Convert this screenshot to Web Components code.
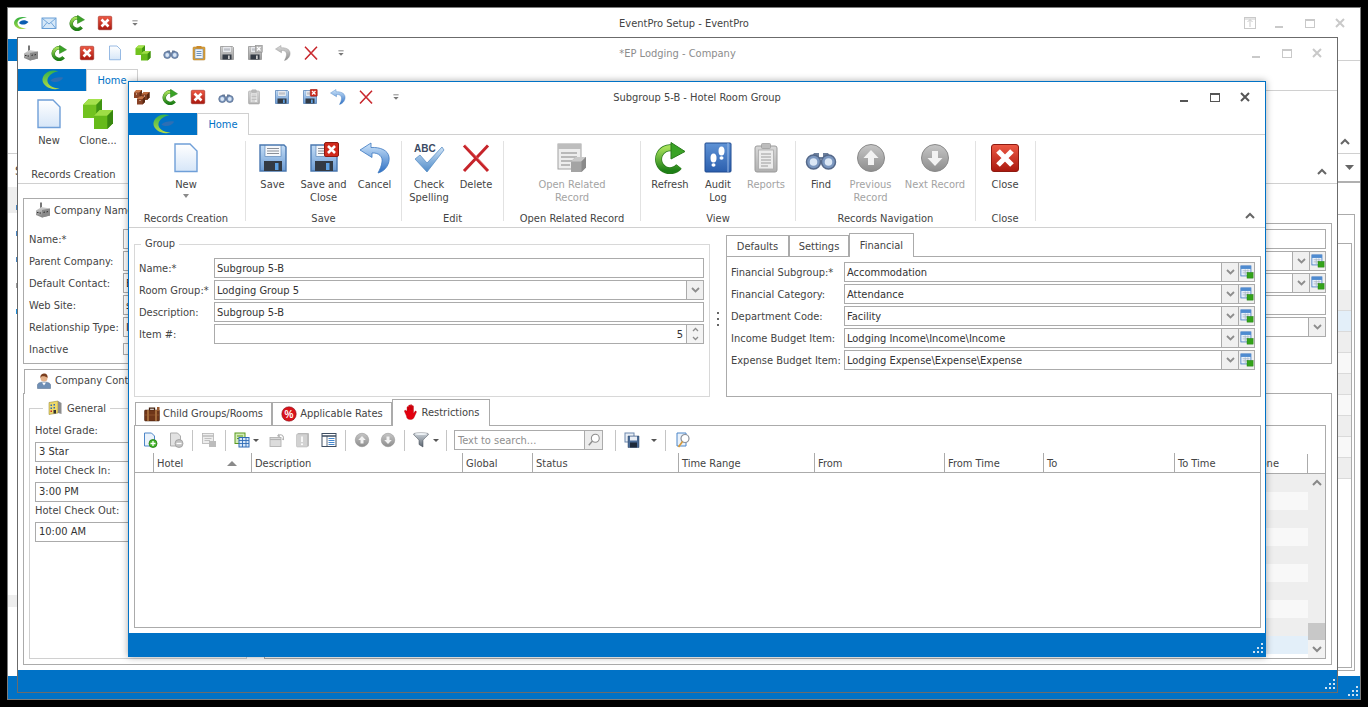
<!DOCTYPE html>
<html lang="en">
<head>
<meta charset="utf-8">
<title>EventPro</title>
<style>
html,body{margin:0;padding:0;background:#000;overflow:hidden}
body{font:condensed 11px "DejaVu Sans Condensed","DejaVu Sans",sans-serif;color:#444}
</style>
</head>
<body>
<x-desktop>

<x-window x="7" y="7" w="1354" h="693" status="23" border="#7d7d7d" heading="EventPro Setup - EventPro" titlecolor="#444" controls="pin" dim>
  <x-qat slot="qat" icons="logoq,mail,refresh,closered,more"></x-qat>
  <x-apptabs></x-apptabs>
  <x-ribbon></x-ribbon>
  <x-peek-main></x-peek-main>
</x-window>

<x-window x="17" y="37" w="1321" h="656" status="22" border="#6b6b6b" heading="*EP Lodging - Company" titlecolor="#8c8c8c" dim>
  <x-qat slot="qat" icons="building,refresh,closered,newdoc,clone,binoc,clipo,saveg,savecloseg,undog,delx,more"></x-qat>
  <x-apptabs home></x-apptabs>
  <x-ribbon>
    <x-rgroup w="117" pr="5" caption="Records Creation">
      <x-rbtn icon="newdoc" w="49" label="New"></x-rbtn>
      <x-rbtn icon="clone" w="49" label="Clone..."></x-rbtn>
    </x-rgroup>
  </x-ribbon>
  <x-company></x-company>
</x-window>

<x-window x="128" y="81" w="1138" h="576" status="23" border="#0072c6" heading="Subgroup 5-B - Hotel Room Group" titlecolor="#444" shadow>
  <x-qat slot="qat" icons="bricks,refresh,closered,binoc,clipg,save,saveclose,undo,delx,more"></x-qat>
  <x-apptabs home></x-apptabs>
  <x-ribbon>
    <x-rgroup w="117" pr="2" caption="Records Creation">
      <x-rbtn icon="newdoc" w="84" label="New" arrow></x-rbtn>
    </x-rgroup>
    <x-rgroup w="156" caption="Save">
      <x-rbtn icon="save" w="51" label="Save"></x-rbtn>
      <x-rbtn icon="saveclose" w="51" label="Save and|Close"></x-rbtn>
      <x-rbtn icon="undo" w="51" label="Cancel"></x-rbtn>
    </x-rgroup>
    <x-rgroup w="102" caption="Edit">
      <x-rbtn icon="spell" w="47" label="Check|Spelling"></x-rbtn>
      <x-rbtn icon="delx" w="47" label="Delete"></x-rbtn>
    </x-rgroup>
    <x-rgroup w="137" caption="Open Related Record">
      <x-rbtn icon="related" w="100" label="Open Related|Record" disabled></x-rbtn>
    </x-rgroup>
    <x-rgroup w="155" caption="View">
      <x-rbtn icon="refresh" w="48" label="Refresh"></x-rbtn>
      <x-rbtn icon="audit" w="48" label="Audit|Log"></x-rbtn>
      <x-rbtn icon="clipg" w="48" label="Reports" disabled></x-rbtn>
    </x-rgroup>
    <x-rgroup w="180" caption="Records Navigation">
      <x-rbtn icon="binoc" w="50" label="Find"></x-rbtn>
      <x-rbtn icon="up" w="49" label="Previous|Record" disabled></x-rbtn>
      <x-rbtn icon="down" w="80" label="Next Record" disabled></x-rbtn>
    </x-rgroup>
    <x-rgroup w="60" pr="1" caption="Close">
      <x-rbtn icon="closered" w="50" label="Close"></x-rbtn>
    </x-rgroup>
  </x-ribbon>
  <x-roomgroup></x-roomgroup>
</x-window>

</x-desktop>

<script>
/* ---------- icons ---------- */
const grad=(id,a,b)=>`<linearGradient id="${id}" x1="0" y1="0" x2="0" y2="1"><stop offset="0" stop-color="${a}"/><stop offset="1" stop-color="${b}"/></linearGradient>`;
const floppy=(a,b,line,x)=>`<defs>${grad('f',a,b)}</defs>
 <path d="M3 3H27L29 5V29H3Z" fill="url(#f)" stroke="${line}" stroke-width="1.4"/>
 <rect x="8" y="3.5" width="16" height="11" fill="#f6f8fb" stroke="${line}" stroke-width=".6"/>
 <path d="M10 6.5H22M10 9H22M10 11.5H22" stroke="#8a8f98" stroke-width="1"/>
 <rect x="7" y="19" width="18" height="10" fill="#333a44"/><rect x="18" y="21" width="3.5" height="7" fill="${x}"/>`;
const redbadge=`<rect x="16.5" y="0.5" width="14" height="14" rx="1.5" fill="#cf2a1c" stroke="#8f1a10"/><path d="M20 4L27 11M27 4L20 11" stroke="#fff" stroke-width="2.6"/>`;
const cube=(x,y,s,t,l,r)=>`<path d="M${x} ${y+s*.3}L${x+s*.3} ${y}H${x+s}V${y+s*.7}L${x+s*.7} ${y+s}H${x}Z" fill="${l}"/><path d="M${x} ${y+s*.3}L${x+s*.3} ${y}H${x+s}L${x+s*.7} ${y+s*.3}Z" fill="${t}"/><path d="M${x+s*.7} ${y+s*.3}L${x+s} ${y}V${y+s*.7}L${x+s*.7} ${y+s}Z" fill="${r}"/>`;
const circ=(dir)=>`<defs>${grad('c','#c6c6c6','#8d8d8d')}</defs><circle cx="16" cy="16" r="13.5" fill="url(#c)" stroke="#8a8a8a"/>
 <path d="${dir?'M16 24L8.5 16H13V9H19V16H23.5Z':'M16 8L23.5 16H19V23H13V16H8.5Z'}" fill="#f2f2f2"/>`;
const ICONS={
 logoq:`<defs>${grad('g','#2fae3c','#a6d94a')}</defs><path d="M28 6C16 0 2 7 2 16s14 16 26 10C18 28 9 23 9 16S18 5 28 6Z" fill="url(#g)"/><path d="M12 16C14 10 24 8 31 14 26 20 17 21 12 16Z" fill="#0b5db0"/>`,
 logo:`<defs>${grad('g','#35b04a','#b6dc45')}</defs><path d="M24 3C12-1 2 7 2 15s12 16 24 12C15 27 8 21 9 15S15 5 24 3Z" fill="url(#g)"/><path d="M13 16C17 12 25 11 31 12 27 18 19 20 13 16Z" fill="#2d6fb4"/>`,
 mail:`<rect x="2" y="6" width="28" height="21" fill="#d6e8f8" stroke="#5a96d2" stroke-width="1.8"/><path d="M3 7L16 18L29 7M3 26L12 15M29 26L20 15" fill="none" stroke="#5a96d2" stroke-width="1.6"/>`,
 refresh:`<defs>${grad('g','#a6e05a','#1d7f16')}</defs><path d="M25 24.5A11.5 11.5 0 1 1 18.5 6" fill="none" stroke="#2a7a1c" stroke-width="7"/><path d="M25 24.5A11.5 11.5 0 1 1 18.5 6" fill="none" stroke="url(#g)" stroke-width="5.6"/><path d="M17 0.5L31 9.5L17 17Z" fill="#3aa326" stroke="#2a7a1c"/>`,
 closered:`<defs>${grad('g','#ee5a45','#a9180e')}</defs><rect x="2.5" y="2.5" width="27" height="27" rx="2.5" fill="url(#g)" stroke="#8f1a10"/><path d="M9 9L23 23M23 9L9 23" stroke="#fff" stroke-width="5.2"/>`,
 more:`<path d="M10 11H22" stroke="#777" stroke-width="2"/><path d="M10 16H22L16 22Z" fill="#777"/>`,
 newdoc:`<defs>${grad('g','#ffffff','#d6e6f8')}</defs><path d="M5 2H20L27 9V29.5H5Z" fill="url(#g)" stroke="#6f9fd8" stroke-width="1.4"/>`,
 clone:`${cube(1,1,19,'#a5e24d','#71c21f','#3f9412')}${cube(12,12,19,'#9edd46','#66ba1a','#38880f')}`,
 binoc:`<path d="M9 11H14V15H18V11H23L27 17H5Z" fill="#6c7f9c"/><circle cx="8.5" cy="20" r="7" fill="#7b97bf" stroke="#55698a" stroke-width="1.5"/><circle cx="23.5" cy="20" r="7" fill="#7b97bf" stroke="#55698a" stroke-width="1.5"/><circle cx="8.5" cy="20" r="3.8" fill="#dbe7f5"/><circle cx="23.5" cy="20" r="3.8" fill="#dbe7f5"/>`,
 clipo:`<rect x="4" y="4" width="24" height="26" rx="2" fill="#e0a33a" stroke="#a8741d"/><rect x="8" y="8" width="16" height="19" fill="#eef4fb" stroke="#4a78b0"/><rect x="11" y="2" width="10" height="5" fill="#c9892a"/><path d="M11 13H21M11 17H21M11 21H21" stroke="#4a78b0" stroke-width="1.6"/>`,
 clipg:`<defs>${grad('g','#d8d8d8','#b0b0b0')}</defs><rect x="5" y="4" width="22" height="26" rx="2" fill="url(#g)" stroke="#9a9a9a"/><rect x="8.5" y="8" width="15" height="19" fill="#ececec" stroke="#aaa" stroke-width=".8"/><rect x="11.5" y="1.5" width="9" height="5" rx="1" fill="#bcbcbc" stroke="#999" stroke-width=".7"/><path d="M11 12H21M11 15H21M11 18H21M11 21H21M11 24H18" stroke="#9c9c9c" stroke-width="1.1"/>`,
 save:floppy('#c6def6','#6b9bd4','#4a78b0','#5d9fe0'),
 saveg:floppy('#d4d4d4','#9a9a9a','#8a8a8a','#c9c9c9'),
 saveclose:floppy('#c6def6','#6b9bd4','#4a78b0','#5d9fe0')+redbadge,
 savecloseg:floppy('#d4d4d4','#9a9a9a','#8a8a8a','#c9c9c9')+`<rect x="16.5" y="0.5" width="14" height="14" fill="#b5b5b5" stroke="#8a8a8a"/><path d="M20 4L27 11M27 4L20 11" stroke="#fff" stroke-width="2.4"/>`,
 undo:`<defs>${grad('g','#cfe6fb','#2c6fc4')}</defs><path d="M12 1L1 8L13 15.5V11C20 10.5 24 15 23 20 22.5 24 21 27 19 31 27 29 31 21 30 15 29 8 21 5 12 5.5Z" fill="url(#g)" stroke="#3d78c0" stroke-width=".8"/>`,
 undog:`<defs>${grad('g','#dcdcdc','#8e8e8e')}</defs><path d="M12 1L1 8L13 15.5V11C20 10.5 24 15 23 20 22.5 24 21 27 19 31 27 29 31 21 30 15 29 8 21 5 12 5.5Z" fill="url(#g)" stroke="#8a8a8a" stroke-width=".8"/>`,
 delx:`<path d="M4 3.5L28 29M28 3.5L4 29" stroke="#c6242a" stroke-width="3"/><path d="M5 3L28 27" stroke="#e8686a" stroke-width=".8"/>`,
 building:`<defs>${grad('g','#d4d4d4','#7e7e7e')}</defs><rect x="10" y="1" width="4" height="11" fill="#777"/><path d="M2 17L13 10L30 13V27L14 31L2 26Z" fill="url(#g)"/><path d="M14 16V31L30 27V13Z" fill="#8a8a8a"/><path d="M4 20h3v2H4zM9 21h3v2H9zM17 20l3-1v2l-3 1zM23 19l3-1v2l-3 1z" fill="#333"/>`,
 bricks:`${cube(0,2,16,'#c9784a','#8a4427','#5d2a14')}${cube(15,6,16,'#bd6b3d','#7e3c21','#54250f')}${cube(6,15,16,'#c47345','#874125','#5a2812')}<path d="M4 9h2v2H4zM20 13h2v2h-2zM11 22h2v2h-2z" fill="#f2dfc8"/>`,
 spell:`<text x="1" y="10" font-family="Liberation Sans" font-weight="700" font-size="10" fill="#3b4a63">ABC</text><defs>${grad('g','#cfe3f6','#4f8bc9')}</defs><path d="M2 17L7 13L14 21L29 5L31 8L14 30Z" fill="url(#g)" stroke="#4f86c0" stroke-width=".7"/>`,
 related:`<rect x="2" y="2" width="23" height="25" fill="#ededed" stroke="#a2a2a2"/><rect x="2" y="2" width="23" height="5" fill="#bdbdbd"/><path d="M5 11H21M5 15H21M5 19H16M5 23H14" stroke="#a8a8a8" stroke-width="1.3"/>${cube(15,15,15,'#c9c9c9','#a4a4a4','#8a8a8a')}`,
 audit:`<defs>${grad('g','#5f93d6','#2b5fae')}</defs><rect x="3" y="1" width="26" height="29" rx="1" fill="url(#g)" stroke="#1f4a90"/><path d="M26 1V30" stroke="#9cbbe6"/><ellipse cx="19.5" cy="9" rx="3" ry="4.6" fill="#fff"/><ellipse cx="19.5" cy="16" rx="2" ry="1.8" fill="#fff"/><ellipse cx="11.5" cy="16" rx="3" ry="4.6" fill="#fff"/><ellipse cx="11.5" cy="23" rx="2" ry="1.8" fill="#fff"/>`,
 up:circ(0),down:circ(1),
 suitcase:`<rect x="1" y="8" width="30" height="22" rx="2" fill="#6e3518" stroke="#3f1e0c"/><path d="M11 8V4H21V8" fill="none" stroke="#3f1e0c" stroke-width="2.5"/><path d="M8 8V30M24 8V30" stroke="#c08a50" stroke-width="2.6"/><path d="M1 18H31" stroke="#a8683a"/><rect x="26" y="2" width="5" height="8" fill="#9a5a30"/>`,
 percent:`<circle cx="16" cy="16" r="14.5" fill="#d9141c" stroke="#77101a"/><text x="16" y="23" text-anchor="middle" font-family="Liberation Sans" font-weight="700" font-size="20" fill="#fff">%</text>`,
 hand:`<path d="M9 14V7c0-2.4 3-2.4 3 0V12V4c0-2.4 3.4-2.4 3.4 0V12V3c0-2.4 3.4-2.4 3.4 0V12V5c0-2.4 3.2-2.4 3.2 0V19l2.6-4c1.4-2 4.2-.4 3 1.8L23 27c-1.5 3-4 4-7.5 4-5 0-7.5-2.5-7.5-7L4 15c-.8-2.2 2-3.4 3.2-1.5Z" fill="#e3000f" stroke="#a8000a" stroke-width=".7" transform="translate(-1 0)"/>`,
 person:`<path d="M3 31V24C3 20 9 18 16 18S29 20 29 24V31Z" fill="#6f8fb5" stroke="#4c6688"/><path d="M12 19L16 25L20 19Z" fill="#fff"/><circle cx="16" cy="10" r="7" fill="#e3b088"/><path d="M9 10C8 3 13 1 17 1S24 4 23 10C21 6 14 6 12 6.5 10.5 7 10 9 9 10Z" fill="#7a3d1e"/>`,
 general:`<path d="M4 5L22 2V26L4 29Z" fill="#eed96a" stroke="#8a7a2a"/><path d="M22 2L29 6V28L22 26Z" fill="#8d8d8d"/><path d="M7 9h3v3H7zM13 8h3v3h-3zM7 15h3v3H7zM13 14h3v3h-3z" fill="#2f6bb5"/><path d="M7 21h3v3H7z" fill="#c6242a"/><path d="M13 20h5v7h-5z" fill="#333"/>`,
 lookup:`<rect x="2" y="2" width="23" height="23" fill="#e8f1fb" stroke="#3d78c0" stroke-width="1.8"/><rect x="2" y="2" width="23" height="7" fill="#4f8bd0"/><path d="M6 13H22M6 18H22M12 10V24M18 10V24" stroke="#a9b6c6" stroke-width="1.8"/><rect x="16" y="17" width="14" height="13" fill="#34a31a" stroke="#1c7a0c"/>`,
 docadd:`<path d="M5 2H19L25 8V28H5Z" fill="#eaf2fb" stroke="#4d86c8" stroke-width="2"/><circle cx="22" cy="23" r="8" fill="#45b52a" stroke="#1f7a12" stroke-width="1.6"/><path d="M22 18V28M17 23H27" stroke="#fff" stroke-width="2.6"/>`,
 docdel:`<path d="M5 2H19L25 8V28H5Z" fill="#e2e2e2" stroke="#ababab" stroke-width="2"/><circle cx="22" cy="23" r="8" fill="#c2c2c2" stroke="#9c9c9c" stroke-width="1.6"/><path d="M17 23H27" stroke="#fff" stroke-width="2.6"/>`,
 listg:`<rect x="3" y="3" width="22" height="20" fill="#ededed" stroke="#b4b4b4" stroke-width="1.6"/><path d="M3 8H25" stroke="#b4b4b4" stroke-width="2.6"/><path d="M7 13H21M7 17H18" stroke="#b4b4b4" stroke-width="1.6"/><rect x="16" y="18" width="14" height="12" fill="#bcbcbc"/>`,
 cols:`<rect x="2" y="2" width="20" height="21" fill="#d4ecb8" stroke="#5a9a1e" stroke-width="2"/><path d="M6 8H18M6 13H18" stroke="#5a9a1e" stroke-width="2"/><rect x="10" y="11" width="20" height="19" fill="#d8e8f8" stroke="#2f6bb5" stroke-width="2"/><path d="M10 17H30M10 23H30M17 11V30M24 11V30" stroke="#2f6bb5" stroke-width="1.8"/>`,
 wing:`<rect x="2" y="11" width="22" height="18" fill="#dcdcdc" stroke="#b2b2b2" stroke-width="1.8"/><path d="M2 15H24" stroke="#b2b2b2" stroke-width="2.4"/><path d="M18 8C24 3 30 6 29 15L26 14" fill="none" stroke="#b2b2b2" stroke-width="2.2"/><path d="M20 3L16 8L22 11Z" fill="#b2b2b2"/>`,
 note:`<rect x="5" y="2" width="23" height="27" rx="2" fill="#bcbcbc"/><rect x="3" y="4" width="22" height="26" rx="2" fill="#d2d2d2" stroke="#b0b0b0"/><path d="M14 9V20" stroke="#fff" stroke-width="3.2"/><circle cx="14" cy="24.5" r="2" fill="#fff"/>`,
 panel:`<rect x="2" y="3" width="28" height="26" fill="#fff" stroke="#3d4c60" stroke-width="2"/><path d="M2 8H30" stroke="#3d4c60" stroke-width="3"/><path d="M12 8V29" stroke="#3d4c60" stroke-width="1.6"/><path d="M15 13H27M15 17H27M15 21H27M15 25H27" stroke="#2f79c8" stroke-width="1.8"/>`,
 funnel:`<defs>${grad('g','#cfd6dc','#5c6570')}</defs><path d="M1 4C1 1 31 1 31 4 31 7 20 14 20 17V30L12 25V17C12 14 1 7 1 4Z" fill="url(#g)" stroke="#3f4750"/><ellipse cx="16" cy="4" rx="12" ry="2" fill="#eef2f5"/>`,
 savem:`<rect x="2" y="2" width="18" height="18" fill="#e8eef6" stroke="#6d88ad" stroke-width="2"/><path d="M8 8H30V31H8Z" fill="#4a6b96" stroke="#2d4566"/><rect x="12" y="9" width="14" height="8" fill="#e9eef5"/><rect x="12" y="21" width="14" height="10" fill="#1e2a3a"/>`,
 find:`<path d="M4 2H22V28H4Z" fill="#eaf2fb" stroke="#4d86c8" stroke-width="2"/><circle cx="20" cy="13" r="8" fill="#fff" stroke="#8a8f98" stroke-width="2.4"/><path d="M15 19L7 30" stroke="#d69a3a" stroke-width="3.4"/>`,
 mag:`<circle cx="19" cy="12" r="9" fill="#fff" stroke="#8e8e8e" stroke-width="2.4"/><path d="M12.5 18.5L4 28" stroke="#8e8e8e" stroke-width="3.4"/>`
};
const def=(name,cls)=>customElements.define(name,cls);
const shadow=(el,html)=>{const r=el.attachShadow({mode:'open'});r.innerHTML=html;return r;};
const esc=s=>(s||'').replace(/&/g,'&amp;').replace(/</g,'&lt;');

def('x-icon',class extends HTMLElement{connectedCallback(){
  if(this.shadowRoot)return;const s=this.getAttribute('size')||16;
  shadow(this,`<style>:host{display:block;width:${s}px;height:${s}px;flex:none}svg{display:block}</style>
  <svg xmlns="http://www.w3.org/2000/svg" width="${s}" height="${s}" viewBox="0 0 32 32">${ICONS[this.getAttribute('name')]||''}</svg>`);
}});

def('x-desktop',class extends HTMLElement{constructor(){super();
  shadow(this,`<style>:host{display:block;position:relative;width:1368px;height:707px;background:#000;overflow:hidden}</style><slot></slot>`);
}});

def('x-window',class extends HTMLElement{connectedCallback(){
  if(this.shadowRoot)return;const a=n=>this.getAttribute(n);
  const dim=this.hasAttribute('dim');const c=dim?'#c9c9c9':'#555';
  const ctl=(k)=>{
    const m={pin:`<rect x="1.5" y="1.5" width="11" height="11" fill="none" stroke="${c}"/><path d="M7 11V4M4.5 6L7 3.5L9.5 6M1 3H13" stroke="${c}" fill="none"/>`,
      min:`<path d="M1 10H9" stroke="${c}" stroke-width="2"/>`,
      max:`<rect x="1.5" y="2.5" width="9" height="8" fill="none" stroke="${c}"/><path d="M1 3H11" stroke="${c}" stroke-width="2"/>`,
      close:`<path d="M2 2L10 10M10 2L2 10" stroke="${c}" stroke-width="2"/>`}[k];
    const w=k=='pin'?14:12;
    return `<span class="c"><svg width="${w}" height="${w}" viewBox="0 0 ${w} ${w}">${m}</svg></span>`;};
  const ctrls=(a('controls')=='pin'?ctl('pin'):'')+ctl('min')+ctl('max')+ctl('close');
  shadow(this,`<style>
  :host{position:absolute;isolation:isolate;left:${a('x')}px;top:${a('y')}px;width:${a('w')}px;height:${a('h')}px;box-sizing:border-box;
    border:1px solid ${a('border')};background:#fff;display:flex;flex-direction:column;
    ${this.hasAttribute('shadow')?'box-shadow:0 0 7px rgba(0,0,0,.35);':''}}
  .t{height:31px;flex:none;display:grid;grid-template-columns:1fr auto 1fr;align-items:center;box-sizing:border-box;padding-bottom:1px}
  .q{margin-left:-1px}
  .h{color:${a('titlecolor')}}
  .cs{display:flex;justify-content:flex-end;padding-right:5px}
  .c{width:30px;display:flex;justify-content:center;align-items:center;height:20px}
  .b{flex:1;min-height:0;display:flex;flex-direction:column}
  .st{height:${a('status')}px;flex:none;background:#0072c6;display:flex;justify-content:flex-end;align-items:flex-end}
  .st svg{display:block;margin:0 2px 3px 0}
  </style>
  <div class="t"><div class="q"><slot name="qat"></slot></div><div class="h">${esc(a('heading'))}</div><div class="cs">${ctrls}</div></div>
  <div class="b"><slot></slot></div>
  <div class="st"><svg width="10" height="10" viewBox="0 0 10 10" fill="#cfe3f4"><path d="M8 0h2v2H8zM4 4h2v2H4zM8 4h2v2H8zM0 8h2v2H0zM4 8h2v2H4zM8 8h2v2H8z"/></svg></div>`);
}});

def('x-qat',class extends HTMLElement{connectedCallback(){
  if(this.shadowRoot)return;
  const ic=this.getAttribute('icons').split(',');
  shadow(this,`<style>:host{display:flex;height:30px}.q{width:28px;display:flex;align-items:center;justify-content:center}.m{margin-left:2px}</style>`+
   ic.map(n=>`<span class="q ${n=='more'?'m':''}"><x-icon name="${n}" size="${n=='more'?14:16}"></x-icon></span>`).join(''));
}});

def('x-apptabs',class extends HTMLElement{connectedCallback(){
  if(this.shadowRoot)return;
  shadow(this,`<style>:host{display:flex;height:22px;flex:none;box-sizing:border-box;border-bottom:1px solid #d0d0d0}
  .a{width:68px;height:22px;background:#0072c6;display:flex;align-items:center;justify-content:center}
  .h{width:52px;height:22px;box-sizing:border-box;border:1px solid #d0d0d0;border-bottom:0;background:#fff;color:#0072c6;display:flex;align-items:center;justify-content:center}
  </style><div class="a"><x-icon name="logo" size="23"></x-icon></div>${this.hasAttribute('home')?'<div class="h">Home</div>':''}`);
}});

def('x-ribbon',class extends HTMLElement{constructor(){super();
  shadow(this,`<style>:host{display:flex;height:93px;flex:none;box-sizing:border-box;border-bottom:1px solid #d0d0d0;padding-top:6px}
  .ch{margin-left:auto;align-self:flex-end;width:20px;margin-right:5px;margin-bottom:8px;display:flex;justify-content:center}
  svg{display:block}</style><slot></slot>
  <div class="ch"><svg width="10" height="7" viewBox="0 0 10 7"><path d="M1 6L5 2L9 6" fill="none" stroke="#666" stroke-width="2"/></svg></div>`);
}});

def('x-rgroup',class extends HTMLElement{connectedCallback(){
  if(this.shadowRoot)return;
  shadow(this,`<style>:host{display:flex;flex-direction:column;width:${this.getAttribute('w')}px;height:80px;box-sizing:border-box;border-right:1px solid #e2e2e2;flex:none}
  .b{flex:1;display:flex;justify-content:center;padding-top:1px;padding-right:${this.getAttribute('pr')||0}px}
  .c{height:14px;line-height:14px;margin-bottom:-5px;text-align:center;color:#444;white-space:nowrap;padding-right:${this.getAttribute('pr')||0}px}</style>
  <div class="b"><slot></slot></div><div class="c">${esc(this.getAttribute('caption'))}</div>`);
}});

def('x-rbtn',class extends HTMLElement{connectedCallback(){
  if(this.shadowRoot)return;const a=n=>this.getAttribute(n);
  const lines=a('label').split('|').map(l=>`<div>${esc(l)}</div>`).join('');
  shadow(this,`<style>:host{display:flex;flex-direction:column;align-items:center;width:${a('w')}px;flex:none;color:${this.hasAttribute('disabled')?'#a3a3a3':'#444'};line-height:13px;text-align:center;white-space:nowrap}
  .l{margin-top:4px}.ar{width:0;height:0;border:3px solid transparent;border-top:4px solid #8a8a8a;border-bottom:0;margin-top:3px}</style>
  <x-icon name="${a('icon')}" size="32"></x-icon><div class="l">${lines}</div>${this.hasAttribute('arrow')?'<div class="ar"></div>':''}`);
}});

def('x-field',class extends HTMLElement{connectedCallback(){
  if(this.shadowRoot)return;const a=n=>this.getAttribute(n);
  const chev=(c='#8d8d8d')=>`<svg width="9" height="6" viewBox="0 0 9 6"><path d="M1 1L4.5 4.5L8 1" fill="none" stroke="${c}" stroke-width="1.8"/></svg>`;
  const t=a('type')||'text';
  let btn='';
  if(t=='combo'||t=='lookup')btn+=`<span class="b">${chev()}</span>`;
  if(t=='spin')btn+=`<span class="s"><svg width="7" height="5" viewBox="0 0 7 5"><path d="M1 4L3.5 1.5L6 4" fill="none" stroke="#8d8d8d" stroke-width="1.3"/></svg><svg width="7" height="5" viewBox="0 0 7 5"><path d="M1 1L3.5 3.5L6 1" fill="none" stroke="#8d8d8d" stroke-width="1.3"/></svg></span>`;
  const look=t=='lookup'?`<span class="k"><x-icon name="lookup" size="14"></x-icon></span>`:'';
  shadow(this,`<style>:host{display:grid;grid-template-columns:var(--label,75px) 1fr;height:20px;align-items:center;color:#444;white-space:nowrap}
  .w{display:flex;height:20px;min-width:0}
  .i{flex:1;min-width:0;box-sizing:border-box;border:1px solid #ababab;display:flex;align-items:center;background:#fff;padding-left:2px;overflow:hidden}
  .v{flex:1;${t=='spin'?'text-align:right;padding-right:3px;':''}color:#333}
  .b{width:16px;height:18px;border-left:1px solid #ababab;background:#f0f0f0;display:flex;align-items:center;justify-content:center;flex:none}
  .s{width:16px;height:18px;border-left:1px solid #ababab;display:flex;flex-direction:column;align-items:center;justify-content:space-around;flex:none;background:#f4f4f4}
  .k{width:16px;box-sizing:border-box;border:1px solid #ababab;border-left:0;background:#f0f0f0;display:flex;align-items:center;justify-content:center;flex:none}
  svg{display:block}</style>
  <div class="lb">${esc(a('label'))}</div><div class="w"><div class="i"><span class="v">${esc(a('value'))}</span>${btn}</div>${look}</div>`);
}});

def('x-tab',class extends HTMLElement{connectedCallback(){
  if(this.shadowRoot)return;const a=n=>this.getAttribute(n);const act=this.hasAttribute('active');
  const i=a('icon');
  shadow(this,`<style>:host{display:flex;align-items:center;justify-content:center;gap:3px;box-sizing:border-box;width:${a('w')}px;height:${a('h')}px;border:1px solid #ababab;border-bottom:0;background:#fff;color:#444;flex:none;white-space:nowrap;position:relative;${act?'margin-bottom:-1px;z-index:1;':''}}</style>
  ${i?`<x-icon name="${i}" size="16"></x-icon>`:''}<span>${esc(a('label'))}</span>`);
}});

def('x-tool',class extends HTMLElement{connectedCallback(){
  if(this.shadowRoot)return;const a=n=>this.getAttribute(n);const ar=this.hasAttribute('arrow');
  const w=a('w')||26;
  shadow(this,`<style>:host{display:flex;align-items:center;justify-content:${ar?'flex-start':'center'};width:${w}px;height:24px;flex:none;${ar?`padding-left:${a('pl')||5}px;box-sizing:border-box;`:''}}
  .ar{width:0;height:0;border:3px solid transparent;border-top:3px solid #555;border-bottom:0;margin-left:${a('gap')||3}px}</style>
  <x-icon name="${a('name')}" size="16"></x-icon>${ar?'<span class="ar"></span>':''}`);
}});

def('x-sep',class extends HTMLElement{constructor(){super();
  shadow(this,`<style>:host{display:flex;justify-content:center;width:7px;height:24px;flex:none}i{display:block;width:1px;height:21px;margin-top:2px;background:#c4c4c4}</style><i></i>`);
}});

def('x-headcell',class extends HTMLElement{connectedCallback(){
  if(this.shadowRoot)return;const a=n=>this.getAttribute(n);
  shadow(this,`<style>:host{display:flex;align-items:center;justify-content:space-between;box-sizing:border-box;width:${a('w')}px;height:19px;border-left:1px solid #ababab;padding:1px ${a('pr')||3}px 0 3px;color:#444;flex:none;white-space:nowrap;overflow:hidden;${a('first')!=null?'border-left:0;':''}}
  .s{width:0;height:0;border:5px solid transparent;border-bottom:5px solid #8a8a8a;border-top:0;margin-right:11px}</style>
  <span>${esc(a('label'))}</span>${this.hasAttribute('sorted')?'<span class="s"></span>':''}`);
}});

/* ----- room group form (front window) ----- */
def('x-roomgroup',class extends HTMLElement{constructor(){super();
  shadow(this,`<style>
  :host{flex:1;min-height:0;display:flex;flex-direction:column;padding:5px 4px 5px 5px;box-sizing:border-box}
  .top{display:flex;height:164px;flex:none}
  fieldset{width:576px;box-sizing:border-box;height:160px;margin:4px 0 0;border:1px solid #d8d8d8;padding:7px 5px 0 4px;display:flex;flex-direction:column;gap:2px;min-width:0}
  legend{margin-left:2px;padding:0 4px;line-height:14px;color:#444}
  .split{width:16px;display:flex;flex-direction:column;align-items:center;justify-content:center;gap:4px;padding-top:7px;box-sizing:border-box}
  .split i{width:2px;height:2px;background:#666;display:block}
  .right{flex:1;display:flex;flex-direction:column;min-width:0}
  .tabs{display:flex;align-items:flex-end;flex:none}
  .pane{flex:1;border:1px solid #ababab;padding:5px 5px 0 4px;display:flex;flex-direction:column;gap:2px;--label:113px;box-sizing:border-box;min-height:0}
  .bottom{flex:1;display:flex;flex-direction:column;min-height:0;margin-top:2px}
  .bt{padding-left:1px;height:26px;box-sizing:border-box}
  .grid{flex:1;border:1px solid #ababab;min-height:0}
  .bar{display:flex;align-items:center;height:26px;padding:2px 0 0 2px;box-sizing:border-box}
  .search{width:149px;height:20px;margin:0 9px 0 4px;border:1px solid #ababab;box-sizing:border-box;display:flex;flex:none;color:#8f8f8f;align-items:center;padding-left:3px}
  .search span{flex:1}
  .search b{width:17px;height:18px;border-left:1px solid #ababab;background:#ececec;display:flex;align-items:center;justify-content:center}
  .head{display:flex;border-bottom:1px solid #ababab;height:19px;margin-top:1px}
  </style>
  <div class="top">
    <fieldset><legend>Group</legend>
      <x-field label="Name:*" value="Subgroup 5-B"></x-field>
      <x-field label="Room Group:*" value="Lodging Group 5" type="combo"></x-field>
      <x-field label="Description:" value="Subgroup 5-B"></x-field>
      <x-field label="Item #:" value="5" type="spin"></x-field>
    </fieldset>
    <div class="split"><i></i><i></i><i></i></div>
    <div class="right">
      <div class="tabs">
        <x-tab label="Defaults" w="63" h="21"></x-tab>
        <x-tab label="Settings" w="60" h="21"></x-tab>
        <x-tab label="Financial" w="65" h="24" active></x-tab>
      </div>
      <div class="pane">
        <x-field label="Financial Subgroup:*" value="Accommodation" type="lookup"></x-field>
        <x-field label="Financial Category:" value="Attendance" type="lookup"></x-field>
        <x-field label="Department Code:" value="Facility" type="lookup"></x-field>
        <x-field label="Income Budget Item:" value="Lodging Income\\Income\\Income" type="lookup"></x-field>
        <x-field label="Expense Budget Item:" value="Lodging Expense\\Expense\\Expense" type="lookup"></x-field>
      </div>
    </div>
  </div>
  <div class="bottom">
    <div class="tabs bt">
      <x-tab label="Child Groups/Rooms" icon="suitcase" w="137" h="23" style="padding-bottom:1px"></x-tab>
      <x-tab label="Applicable Rates" icon="percent" w="120" h="23" style="padding-bottom:1px"></x-tab>
      <x-tab label="Restrictions" icon="hand" w="98" h="27" active style="padding-bottom:2px"></x-tab>
    </div>
    <div class="grid">
      <div class="bar">
        <x-tool name="docadd"></x-tool><x-tool name="docdel"></x-tool><x-sep></x-sep>
        <x-tool name="listg"></x-tool><x-sep></x-sep>
        <x-tool name="cols" w="33" arrow></x-tool>
        <x-tool name="wing" style="margin-left:2px"></x-tool><x-tool name="note"></x-tool><x-tool name="panel"></x-tool><x-sep></x-sep>
        <x-tool name="up"></x-tool><x-tool name="down"></x-tool><x-sep></x-sep>
        <x-tool name="funnel" w="35" arrow pl="5" gap="4"></x-tool><x-sep></x-sep>
        <div class="search"><span>Text to search...</span><b><x-icon name="mag" size="14"></x-icon></b></div>
        <x-sep></x-sep>
        <x-tool name="savem" w="43" arrow pl="5" gap="11"></x-tool><x-sep></x-sep>
        <x-tool name="find" style="margin-left:1px"></x-tool>
      </div>
      <div class="head">
        <x-headcell first w="18" label=""></x-headcell>
        <x-headcell w="98" label="Hotel" sorted></x-headcell>
        <x-headcell w="211" label="Description"></x-headcell>
        <x-headcell w="70" label="Global"></x-headcell>
        <x-headcell w="146" label="Status"></x-headcell>
        <x-headcell w="136" label="Time Range"></x-headcell>
        <x-headcell w="130" label="From"></x-headcell>
        <x-headcell w="99" label="From Time"></x-headcell>
        <x-headcell w="131" label="To"></x-headcell>
        <x-headcell w="85" label="To Time"></x-headcell>
      </div>
    </div>
  </div>`);
}});

/* ----- company form (middle window) ----- */
def('x-company',class extends HTMLElement{constructor(){super();
  const rows=Array.from({length:10},(_,i)=>`<div class="r" style="background:${i==9?'#e3eff9':i%2?'#f8f8f8':'#eeeeee'}"></div>`).join('');
  shadow(this,`<style>
  :host{flex:1;min-height:0;display:flex;flex-direction:column;padding:13px 5px 5px 5px;box-sizing:border-box;--label:94px}
  .tabs{display:flex;align-items:flex-end;height:26px;flex:none}
  .p1{height:141px;box-sizing:border-box;border:1px solid #ababab;padding:5px 5px 0 5px;display:flex;flex-direction:column;gap:2px;flex:none}
  .chk{display:flex;align-items:center;height:20px;color:#444}
  .chk span{width:94px}.chk i{width:12px;height:12px;border:1px solid #ababab;box-sizing:border-box;display:block}
  .t2{margin-top:4px;height:25px;padding-left:1px}
  .p2{flex:1;min-height:0;box-sizing:border-box;border:1px solid #ababab;display:flex;padding:0 5px 5px 5px}
  fieldset{width:218px;box-sizing:border-box;margin:6px 0 0;border:1px solid #d0d0d0;padding:4px 6px 0 5px;min-width:0;flex:none}
  legend{margin-left:8px;padding:0 4px;display:flex;align-items:center;gap:4px;color:#444}
  .l{height:20px;display:flex;align-items:center;color:#444}
  .in{height:20px;box-sizing:border-box;border:1px solid #ababab;padding-left:3px;line-height:18px;color:#333;margin:2px 0 -2px}
  .g{margin-left:17px;flex:1;min-width:0;margin-top:31px;border:1px solid #ababab;display:flex;flex-direction:column}
  .hd{margin-top:28px;height:19px;border-bottom:1px solid #ababab;display:flex;justify-content:flex-end;flex:none}
  .hd span{padding-right:28px;line-height:19px;color:#444}
  .hd b{width:17px;border-left:1px solid #ababab;font-weight:400}
  .bd{flex:1;display:flex;min-height:0}
  .rows{flex:1}
  .r{height:18px}
  .sb{width:17px;display:flex;flex-direction:column;background:#eee;align-items:center}
  .sb svg{display:block;margin-top:5px}
  .sb .sp{flex:1}
  .th{width:17px;height:17px;background:#c8c8c8;flex:none}
  .en{width:17px;height:18px;background:#f2f2f2;display:flex;justify-content:center;align-items:center}
  .en svg{margin:0}
  </style>
  <div class="tabs"><x-tab label="Company Name" icon="building" w="111" h="26" active style="justify-content:flex-start;padding-left:11px;padding-bottom:3px"></x-tab></div>
  <div class="p1">
    <x-field label="Name:*"></x-field>
    <x-field label="Parent Company:" type="lookup"></x-field>
    <x-field label="Default Contact:" value="E" type="lookup"></x-field>
    <x-field label="Web Site:" value="s"></x-field>
    <x-field label="Relationship Type:" value="I" type="combo"></x-field>
    <div class="chk"><span>Inactive</span><i></i></div>
  </div>
  <div class="tabs t2"><x-tab label="Company Contacts" icon="person" w="120" h="25" active style="justify-content:flex-start;padding-left:11px;padding-bottom:3px"></x-tab></div>
  <div class="p2">
    <fieldset><legend><x-icon name="general" size="16"></x-icon>General</legend>
      <div class="l">Hotel Grade:</div><div class="in">3 Star</div>
      <div class="l">Hotel Check In:</div><div class="in">3:00 PM</div>
      <div class="l">Hotel Check Out:</div><div class="in">10:00 AM</div>
    </fieldset>
    <div class="g">
      <div class="hd"><span>Phone</span><b></b></div>
      <div class="bd"><div class="rows">${rows}</div>
        <div class="sb"><svg width="10" height="7" viewBox="0 0 10 7"><path d="M1 6L5 2L9 6" fill="none" stroke="#888" stroke-width="2"/></svg><div class="sp"></div><div class="th"></div><div class="en"><svg width="10" height="7" viewBox="0 0 10 7"><path d="M1 1L5 5L9 1" fill="none" stroke="#888" stroke-width="2"/></svg></div></div>
      </div>
    </div>
  </div>`);
}});

/* ----- main window: only its edges show ----- */
def('x-peek-main',class extends HTMLElement{constructor(){super();
  const marks=['#4a86c0','#4a86c0','#4a86c0','#9a9a9a','#1f8fd8'];
  const rows=['#eee','#e3eff9','#eee','#f8f8f8','#eee','#f8f8f8','#eee','#f8f8f8','#eee'].map(c=>`<div class="r" style="background:${c}"></div>`).join('');
  shadow(this,`<style>
  :host{flex:1;min-height:0;display:flex;flex-direction:column}
  .bar{height:27px;flex:none;display:flex;justify-content:space-between;align-items:center;box-sizing:border-box}
  .bar span{padding-left:7px;color:#444;font-size:13px;margin-top:6px}
  .bar svg{display:block;margin-right:6px}
  .thick{height:2px;flex:none;display:flex;justify-content:flex-end}
  .thick i{display:block;width:22px;background:#b0b0b0}
  .main{flex:1;min-height:0;display:flex;justify-content:space-between}
  .left{width:10px;display:flex;flex-direction:column;padding-top:4px}
  .m{height:26px;flex:none;display:flex;justify-content:flex-end;align-items:flex-end;padding-bottom:3px;box-sizing:border-box}
  .m i{display:block;width:2px;height:5px}
  .m.b{background:#eee}
  .band{margin-top:278px;height:12px;background:#eee;flex:none}
  .o{width:17px;margin:31px 5px 5px 0;border:solid #ababab;border-width:1px 1px 1px 0;box-sizing:border-box;display:flex;flex-direction:column}
  .i{flex:1;margin:28px 2px 2px 0;border:solid #ababab;border-width:1px 1px 1px 0;padding-top:46px;min-height:0}
  .r{height:20px;border-bottom:1px solid #dadada}
  </style>
  <div class="bar"><span>S</span><svg width="9" height="6" viewBox="0 0 9 6"><path d="M0 0H9L4.5 5Z" fill="#666"/></svg></div>
  <div class="thick"><i></i></div>
  <div class="main">
    <div class="left">${marks.map((c,i)=>`<div class="m ${i==0?'b':''}"><i style="background:${c}"></i></div>`).join('')}<div class="band"></div></div>
    <div class="o"><div class="i">${rows}</div></div>
  </div>`);
}});
</script>
</body>
</html>
